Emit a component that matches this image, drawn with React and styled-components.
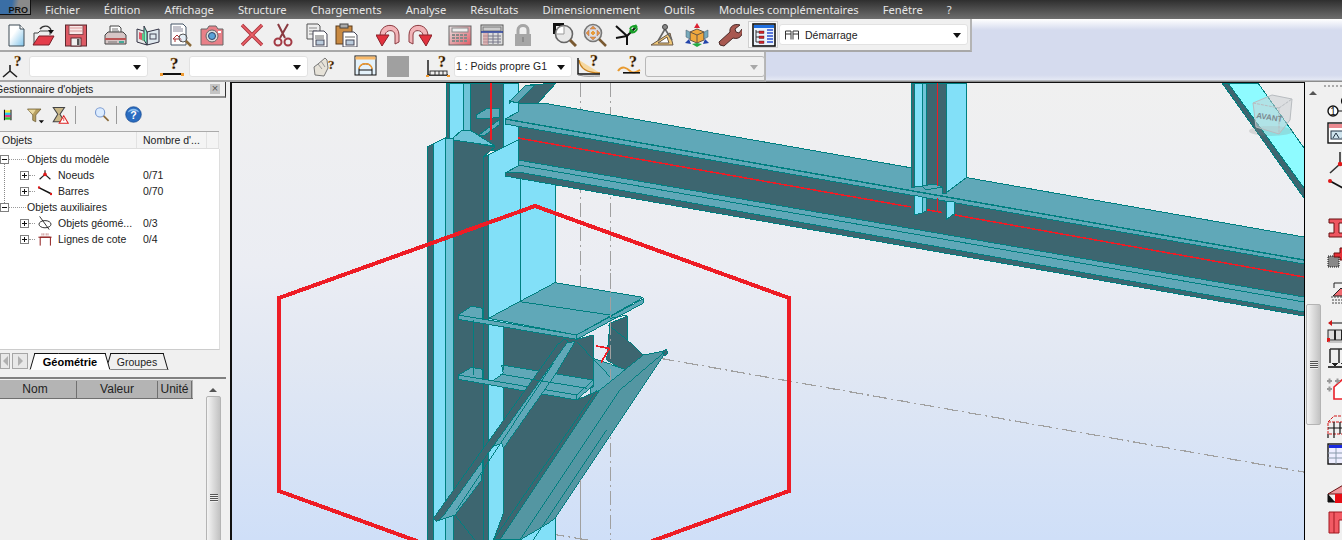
import styled, { createGlobalStyle } from "styled-components";

const GlobalStyle = createGlobalStyle`
  html, body {
    margin: 0;
    padding: 0;
    background: #f0f0f0;
    overflow: hidden;
  }
  * { box-sizing: border-box; }
`;

const UI_FONT = `"Liberation Sans", Arial, sans-serif`;

/* ---------- toolbar icons ---------- */
const Svg = ({ children, size = 24 }) => (
  <svg width={size} height={size} viewBox="0 0 24 24" style={{ display: "block" }}>{children}</svg>
);

const QMark = ({ x = 14, y = 11, size = 14 }) => (
  <text x={x} y={y} fontFamily="Liberation Serif, serif" fontWeight="bold" fontSize={size} fill="#111" stroke="#c8801c" strokeWidth=".3">?</text>
);

const NewIcon = () => (
  <Svg>
    <defs>
      <linearGradient id="pageFill" x1="0" y1="0" x2="1" y2="1">
        <stop offset="0.35" stopColor="#ffffff" />
        <stop offset="1" stopColor="#7fc3ea" />
      </linearGradient>
      <linearGradient id="pinkFill" x1="0" y1="0" x2="1" y2="1">
        <stop offset="0" stopColor="#e8e8e8" />
        <stop offset="1" stopColor="#e25c66" />
      </linearGradient>
    </defs>
    <path d="M5 2h11l4 4v17H5z" fill="url(#pageFill)" stroke="#3c4a55" />
    <path d="M16 2v4h4" fill="#fff" stroke="#3c4a55" />
  </Svg>
);
const OpenIcon = () => (
  <Svg>
    <path d="M3 21V10h4l2-2h10v4" fill="#eee" stroke="#444" />
    <path d="M2 22l6-9h15l-5 9z" fill="#e43c4a" stroke="#7a1f28" />
    <path d="M9 6c3-4 9-4 11 1" fill="none" stroke="#333" strokeWidth="1.400" />
    <path d="M17 7h6l-3 4z" fill="#111" />
  </Svg>
);
const SaveIcon = () => (
  <Svg>
    <rect x="1.500" y="2" width="21" height="21" fill="#dd5a64" stroke="#5a2a30" />
    <rect x="5" y="2.500" width="14" height="9" fill="#f8e8e8" stroke="#8a4a50" />
    <path d="M6 5h12M6 8h12" stroke="#d99" />
    <rect x="7" y="15" width="10" height="8" fill="#f0f0f0" stroke="#5a2a30" />
    <rect x="13" y="16" width="2.500" height="6" fill="#555" />
  </Svg>
);
const PrintIcon = () => (
  <Svg>
    <path d="M7 3h9l2 2v7H7z" fill="#fff" stroke="#444" />
    <path d="M9 6h6M9 8h7" stroke="#777" />
    <path d="M2 12l3-3h15l3 3v9H2z" fill="#d6c6c6" stroke="#444" />
    <path d="M2 16h21" stroke="#b55" strokeWidth="2" />
    <rect x="16" y="18" width="5" height="2" fill="#4a9" />
    <path d="M5 19h9" stroke="#777" />
  </Svg>
);
const BookIcon = () => (
  <Svg>
    <path d="M1 6l10 3v13L1 19z" fill="#e8e8e8" stroke="#334" />
    <path d="M11 9l12-3v13l-12 3z" fill="#dfe8ee" stroke="#334" />
    <path d="M8 3l3 6v13l-3-5z" fill="#8fc" stroke="#334" />
    <path d="M3 9l5 2v7l-5-2z" fill="#e05a6a" />
    <path d="M6 10l2 1v7l-2-1z" fill="#5c8" />
    <rect x="14" y="11" width="6" height="5" fill="none" stroke="#445" />
  </Svg>
);
const PreviewIcon = () => (
  <Svg>
    <path d="M3 1h12l3 3v18H3z" fill="#fff" stroke="#456" />
    <path d="M5 4h8M5 6h10M5 8h10" stroke="#889" />
    <path d="M5 16l4-4 4 4M5 16h8v3M7 16v3" fill="none" stroke="#a33" />
    <circle cx="15" cy="15" r="4" fill="#cde" fillOpacity=".5" stroke="#555" />
    <path d="M18 18l5 5" stroke="#8a6a3a" strokeWidth="2.500" />
  </Svg>
);
const CameraIcon = () => (
  <Svg>
    <path d="M1 6h6l2-3h7l2 3h5v16H1z" fill="#e98088" stroke="#666" />
    <circle cx="12" cy="13" r="6" fill="#ddd" stroke="#666" />
    <circle cx="12" cy="13" r="3.500" fill="#5ba3d8" stroke="#346" />
    <rect x="18" y="8" width="3" height="2" fill="#fff" />
  </Svg>
);
const DeleteIcon = () => (
  <Svg>
    <path d="M2 2l20 20M22 2L2 22" stroke="#a8343c" strokeWidth="3.400" />
    <path d="M2 2l20 20M22 2L2 22" stroke="#ec6068" strokeWidth="1.600" />
  </Svg>
);
const CutIcon = () => (
  <Svg>
    <path d="M7 1l7 14M17 1L9 15" stroke="#8a3a40" strokeWidth="2" />
    <circle cx="7" cy="19" r="3.500" fill="none" stroke="#a33a44" strokeWidth="2" />
    <circle cx="17" cy="19" r="3.500" fill="none" stroke="#a33a44" strokeWidth="2" />
  </Svg>
);
const CopyIcon = () => (
  <Svg>
    <path d="M2 1h11l2 2v13H2z" fill="#eee" stroke="#555" />
    <path d="M4 5h8M4 8h8M4 11h8" stroke="#888" />
    <path d="M8 8h11l3 3v13H8z" fill="#fff" stroke="#445" />
    <path d="M10 13h9M10 15h9" stroke="#666" />
    <rect x="11" y="17" width="8" height="5" fill="#bcd" stroke="#445" />
  </Svg>
);
const PasteIcon = () => (
  <Svg>
    <rect x="1" y="3" width="16" height="18" fill="#c98a42" stroke="#5a3a1a" />
    <rect x="5" y="1" width="8" height="4" fill="#aaa" stroke="#444" />
    <path d="M8 9h11l3 3v12H8z" fill="#fff" stroke="#445" />
    <path d="M10 14h10" stroke="#666" />
    <rect x="11" y="17" width="8" height="5" fill="#bcd" stroke="#445" />
  </Svg>
);
const UndoIcon = ({ flip }) => (
  <Svg>
    <g transform={flip ? "translate(24,0) scale(-1,1)" : undefined}>
      <path d="M4 13C4 -1 23 -1 23 12v7l-4 2v-9C19 6 9 6 9 13z" fill="#f2b4b8" stroke="#8a3a40" />
      <path d="M0 12h13l-7 11z" fill="#e2323e" stroke="#8a2028" />
    </g>
  </Svg>
);
const CalcIcon = () => (
  <Svg>
    <rect x="1" y="3" width="22" height="19" fill="url(#pinkFill)" stroke="#666" />
    <rect x="4" y="5" width="16" height="4" fill="#eee" stroke="#888" />
    {[11, 14, 17].map((y) => [4, 8, 12, 16].map((x) => <rect key={`${x}-${y}`} x={x} y={y} width="3" height="2" fill="#888" />))}
  </Svg>
);
const TableCalcIcon = () => (
  <Svg>
    <rect x="1" y="2" width="22" height="20" fill="#ddd" stroke="#555" />
    <rect x="3" y="4" width="18" height="4" fill="#ccc" stroke="#777" />
    <path d="M1 9h22" stroke="#223a9a" strokeWidth="1.500" />
    <path d="M3 13h18M3 16h18M3 19h18M8 10v11M13 10v11M18 10v11" stroke="#778" />
    <rect x="3" y="10" width="5" height="12" fill="#d99" fillOpacity=".6" />
  </Svg>
);
const LockIcon = () => (
  <Svg>
    <path d="M7 11V7c0-6 10-6 10 0v4" fill="none" stroke="#a6a6a6" strokeWidth="3" />
    <rect x="4" y="11" width="16" height="12" fill="#a6a6a6" />
    <rect x="11" y="14" width="2" height="5" fill="#8c8c8c" />
  </Svg>
);
const ZoomIcon = () => (
  <Svg>
    <path d="M0 0h11v3H3v8H0z" fill="#111" />
    <circle cx="11" cy="11" r="8.500" fill="#e8e8e8" stroke="#666" strokeWidth="1.600" />
    <path d="M3 11a8 8 0 0 1 8-8v8z" fill="#fff" stroke="#999" />
    <path d="M17 17l6 6" stroke="#7a5a32" strokeWidth="3" />
  </Svg>
);
const ZoomPanIcon = () => (
  <Svg>
    <circle cx="10" cy="10" r="8.500" fill="#ddd" stroke="#777" strokeWidth="1.600" />
    <path d="M10 3l3 3H7zM10 17l3-3H7zM3 10l3-3v6zM17 10l-3-3v6z" fill="#e89a3a" stroke="#a66" strokeWidth=".5" />
    <path d="M8 10h4M10 8v4" stroke="#e89a3a" strokeWidth="2" />
    <path d="M16 16l7 7" stroke="#7a5a32" strokeWidth="2.500" />
  </Svg>
);
const AxesIcon = () => (
  <Svg>
    <path d="M1 3l11 10v9M12 13l-11 2M12 13L21 4" fill="none" stroke="#111" strokeWidth="2" />
    <path d="M15 6c1-3 5-4 7-2M22 6c-1 3-4 4-6 3" fill="none" stroke="#18a028" strokeWidth="2" />
    <path d="M21 1l2 5-5-1zM14 10l1-5 4 3z" fill="#18a028" />
  </Svg>
);
const SquareIcon = () => (
  <Svg>
    <path d="M1 22L20 10l3 12z" fill="#f0c878" stroke="#654" />
    <path d="M8 20l9-6 2 6z" fill="#fff" stroke="#654" />
    <path d="M15 6l-7 12M15 6l7 11" stroke="#666" strokeWidth="1.600" />
    <circle cx="15" cy="4" r="2.500" fill="#888" stroke="#444" />
  </Svg>
);
const CubeIcon = () => (
  <Svg>
    <path d="M12 6l7 3v8l-7 3-7-3V9z" fill="#f0a83c" stroke="#654" />
    <path d="M5 9l7 3 7-3M12 12v8" fill="none" stroke="#654" />
    <path d="M12 0l3 5H9z" fill="#d23" />
    <path d="M0 20l4-4 2 5zM24 20l-4-4-2 5z" fill="#24a" />
    <path d="M1 7l4 2v7l-4-2zM23 7l-4 2v7l4-2z" fill="#7ab" stroke="#456" strokeWidth=".5" />
    <path d="M7 21l5 3 5-3-5-1z" fill="#2a4" />
  </Svg>
);
const WrenchIcon = () => (
  <Svg>
    <path d="M2 22l-1-3L12 9c-1-5 4-9 10-7l-5 4 1 3 3 1 3-4c2 6-3 11-9 9L6 23z" fill="#a85850" stroke="#4a2a28" />
  </Svg>
);
const TreeIcon = () => (
  <Svg>
    <rect x="1" y="1" width="22" height="22" fill="#eaf2fb" stroke="#111" strokeWidth="1.600" />
    <rect x="2" y="2" width="20" height="3" fill="#1f6fe0" />
    <path d="M4 7v12M4 9h3M4 14h3M4 19h3" stroke="#333" />
    <rect x="7" y="8" width="5" height="2.500" fill="#d2232a" stroke="#411" strokeWidth=".4" />
    <rect x="7" y="13" width="5" height="2.500" fill="#d2232a" stroke="#411" strokeWidth=".4" />
    <rect x="7" y="18" width="5" height="2.500" fill="#d2232a" stroke="#411" strokeWidth=".4" />
    <path d="M15 7h6M15 10h6M15 13h6M15 16h6M15 19h6" stroke="#2b50d0" strokeWidth="1.300" />
  </Svg>
);
const NodeQIcon = () => (
  <Svg>
    <path d="M8 11v6M8 17l-7 6M8 17l7 6" fill="none" stroke="#222" strokeWidth="1.600" />
    <QMark x={12} y={12} size={15} />
  </Svg>
);
const BarQIcon = () => (
  <Svg>
    <rect x="1" y="19" width="22" height="2" fill="#111" />
    <rect x="0" y="19" width="3" height="3" fill="#f09a30" />
    <rect x="21" y="19" width="3" height="3" fill="#f09a30" />
    <QMark x={10} y={15} size={17} />
  </Svg>
);
const HandQIcon = () => (
  <Svg>
    <path d="M2 21l-1-8 4-3 7-6 2 2 1 8-4 8z" fill="#e6e2d8" stroke="#777" />
    <path d="M5 10l4 5M8 7l4 6" stroke="#999" />
    <QMark x={15} y={15} size={13} />
  </Svg>
);
const FrameIcon = () => (
  <Svg>
    <rect x="1" y="2" width="21" height="19" fill="#e4f2fb" stroke="#111" />
    <rect x="1.500" y="2.500" width="20" height="3" fill="#f8b868" />
    <path d="M5 21v-6c0-7 13-7 13 0v6M5 16h13" fill="none" stroke="#111" />
    <path d="M5 15c1-7 12-7 13 0" fill="none" stroke="#f09a30" strokeWidth="1.400" />
  </Svg>
);
const LoadQIcon = () => (
  <Svg>
    <path d="M2 6v15h20" fill="none" stroke="#111" strokeWidth="1.400" />
    <rect x="4" y="17" width="17" height="4" fill="#eee" stroke="#333" />
    <path d="M9 17v4M13 17v4M17 17v4" stroke="#333" />
    <rect x="0" y="21" width="3" height="2" fill="#f09a30" />
    <rect x="21" y="21" width="3" height="2" fill="#f09a30" />
    <QMark x={12} y={13} size={16} />
  </Svg>
);
const SlopeQIcon = () => (
  <Svg>
    <path d="M2 6c1 8 8 13 21 13" fill="#f6d8a0" stroke="#c8801c" strokeWidth="1.400" />
    <path d="M1 4v16h22" fill="none" stroke="#111" strokeWidth="1.400" />
    <path d="M1 21c8 2 14 1 22 1" fill="none" stroke="#888" />
    <QMark x={13} y={12} size={16} />
  </Svg>
);
const CurveQIcon = () => (
  <Svg>
    <path d="M1 17c4-6 9-3 12 0s6 1 10-1" fill="none" stroke="#e89a30" strokeWidth="2" />
    <rect x="6" y="18" width="17" height="1.600" fill="#111" />
    <QMark x={12} y={13} size={16} />
  </Svg>
);

/* ---------- side bar icons ---------- */
const BindIcon = () => (
  <Svg>
    <path d="M6 3v18M17 3v18" stroke="#111" strokeWidth="2" />
    <rect x="7" y="4" width="9" height="4" fill="#f4e830" />
    <rect x="7" y="8" width="9" height="4" fill="#28c8f0" />
    <rect x="7" y="12" width="9" height="4" fill="#e83a8a" />
    <rect x="7" y="16" width="9" height="4" fill="#30c030" />
  </Svg>
);
const FunnelIcon = () => (
  <Svg>
    <path d="M2 4h18l-7 8v9l-4-2v-7z" fill="#b8a060" stroke="#6a5a30" />
    <path d="M3 5h10l-4 6z" fill="#e8d8a0" />
    <path d="M17 19h7l-3.500 4z" fill="#111" />
  </Svg>
);
const HourFilterIcon = () => (
  <Svg>
    <path d="M3 2h15l-6 9 6 10H3l6-10z" fill="#cab888" stroke="#444" strokeWidth="1.400" />
    <path d="M17 13l6 10H11z" fill="#fff" stroke="#d22" strokeWidth="1.400" />
    <path d="M17 16v4" stroke="#d22" />
  </Svg>
);
const SearchIcon = () => (
  <Svg>
    <circle cx="10" cy="9" r="6.500" fill="#dcecff" stroke="#7a9ad0" strokeWidth="1.600" />
    <path d="M15 14l7 7" stroke="#8a6a3a" strokeWidth="2.400" />
  </Svg>
);
const HelpIcon = () => (
  <Svg>
    <circle cx="12" cy="12" r="11" fill="#2a6cc0" stroke="#164a90" />
    <path d="M4 9c2-7 14-7 16 0-5-3-11-3-16 0z" fill="#8cc0f0" />
    <text x="12" y="18" textAnchor="middle" fontFamily="Liberation Sans, sans-serif" fontWeight="bold" fontSize="15" fill="#fff">?</text>
  </Svg>
);
const NodeTreeIcon = () => (
  <Svg size={16}>
    <path d="M12 11v-7M12 11l-9 8M12 11l9 8" stroke="#222" strokeWidth="2" />
    <circle cx="12" cy="11" r="3" fill="#e01818" />
  </Svg>
);
const BarTreeIcon = () => (
  <Svg size={16}>
    <path d="M1 6l22 11" stroke="#111" strokeWidth="2.400" />
    <circle cx="2" cy="6" r="2" fill="#e01818" />
    <circle cx="22" cy="17" r="2" fill="#e01818" />
  </Svg>
);
const GeomTreeIcon = () => (
  <Svg size={16}>
    <path d="M3 1l16 22" stroke="#111" strokeWidth="1.400" />
    <ellipse cx="12" cy="14" rx="10" ry="6" fill="none" stroke="#111" strokeWidth="1.400" />
  </Svg>
);
const DimTreeIcon = () => (
  <Svg size={16}>
    <path d="M4 23V9h17v14" fill="none" stroke="#8a1414" strokeWidth="1.600" />
    <path d="M1 9h22" stroke="#8a1414" strokeWidth="1.600" />
    <path d="M7 6V2M10 6V2M14 6V2M17 6V2" stroke="#8a1414" strokeDasharray="2 1" />
  </Svg>
);

/* ---------- right bar icons ---------- */
const SnapIcon = () => (
  <Svg>
    <circle cx="6" cy="15" r="5" fill="#fff" stroke="#111" strokeWidth="1.400" />
    <text x="6" y="19" textAnchor="middle" fontFamily="Liberation Sans, sans-serif" fontSize="10" fill="#111">1</text>
    <path d="M11 15h13" stroke="#111" />
    <circle cx="19" cy="5" r="4.500" fill="#fff" stroke="#111" strokeWidth="1.200" />
  </Svg>
);
const ViewIcon = () => (
  <Svg>
    <rect x="1" y="2" width="23" height="20" fill="#fff" stroke="#111" strokeWidth="1.400" />
    <rect x="2" y="3" width="22" height="4" fill="#ea8a90" />
    <rect x="4" y="10" width="20" height="8" fill="#cfe4ee" stroke="#234" />
    <path d="M6 17l3-5 3 5M15 17l3-5 3 5" fill="none" stroke="#234" />
  </Svg>
);
const NodeBarIcon = () => (
  <Svg>
    <path d="M13 2v12M13 14L3 23M13 14l11 5" stroke="#333" strokeWidth="1.600" />
    <circle cx="13" cy="14" r="2.200" fill="#e01818" />
  </Svg>
);
const LineBarIcon = () => (
  <Svg>
    <path d="M3 5l22 12" stroke="#111" strokeWidth="1.800" />
    <circle cx="3" cy="5" r="2" fill="#e01818" />
  </Svg>
);
const BeamIcon = () => (
  <Svg>
    <path d="M2 3h22v4H12v10h12v4H2v-4h5V7H2z" fill="#ee5560" stroke="#611" />
  </Svg>
);
const SectionIcon = () => (
  <Svg>
    <rect x="1" y="11" width="11" height="11" fill="#888" stroke="#111" strokeDasharray="1 1" />
    <path d="M7 8h6V3h12v12H13v-3H7z" fill="#e83038" stroke="#611" />
  </Svg>
);
const SupportIcon = () => (
  <Svg>
    <path d="M7 2v5M24 2H7M14 7l-8 8h16z" fill="#f06a70" stroke="#222" />
    <path d="M4 16h24M5 19h24M5 22h24" stroke="#444" strokeDasharray="2 1" />
  </Svg>
);
const SpanIcon = () => (
  <Svg>
    <path d="M2 3h22" stroke="#111" />
    <path d="M1 3l4-3v6zM24 0v6" fill="#d01818" />
    <rect x="1" y="10" width="24" height="10" fill="#ddd" stroke="#222" />
    <path d="M8 10v10M15 10v10M22 10v10" stroke="#222" strokeWidth="2" />
    <rect x="0" y="18" width="3" height="4" fill="#e01818" />
    <path d="M1 22h24" stroke="#999" />
  </Svg>
);
const LoadsIcon = () => (
  <Svg>
    <path d="M3 2h20v14M3 2v14M12 2v14" fill="none" stroke="#333" strokeWidth="1.600" />
    <path d="M1 20h24" stroke="#111" strokeWidth="1.600" />
    <path d="M5 16l3 3 3-3M14 16l3 3 3-3" fill="#222" stroke="#222" />
  </Svg>
);
const HouseIcon = () => (
  <Svg>
    <path d="M7 23V11l10-9 8 7v14z" fill="#fff" stroke="#ea2028" strokeWidth="1.600" />
    <path d="M0 5h5M2.500 2.500v5M8 5h5M10.500 2.500v5M0 13h5M2.500 10.500v5" stroke="#999" strokeWidth="2" />
  </Svg>
);
const GridCubeIcon = () => (
  <Svg>
    <path d="M1 8h18v12H1zM7 2h18M1 8l6-6M19 8l6-6" fill="none" stroke="#d01818" strokeDasharray="3 1" />
    <path d="M7 8v16M13 8v12M1 14h18M1 20v4M19 20v4" stroke="#111" strokeWidth="1.200" />
  </Svg>
);
const GridTableIcon = () => (
  <Svg>
    <rect x="1" y="2" width="24" height="20" fill="#eef" stroke="#111" strokeWidth="1.400" />
    <rect x="2" y="3" width="23" height="3" fill="#1a2ae0" />
    <path d="M9 6v16M17 6v16M1 11h24M1 16h24" stroke="#89a" />
  </Svg>
);
const FootingIcon = () => (
  <Svg>
    <path d="M1 13L18 3h7v10z" fill="#ee9aa0" stroke="#611" />
    <rect x="8" y="13" width="17" height="9" fill="#e80c14" />
    <path d="M1 13v8h7" fill="#111" stroke="#111" />
    <path d="M16 13v9" stroke="#111" strokeWidth="1.600" />
  </Svg>
);
const PortalIcon = () => (
  <Svg>
    <path d="M2 2h24v8H12v13H2z" fill="#f25a64" stroke="#a01820" />
    <path d="M7 2v21" stroke="#a01820" />
  </Svg>
);

const MAIN_TOOLS = [
  [NewIcon, 4], [OpenIcon, 3], [SaveIcon, 9], [PrintIcon, 15], [BookIcon, 9], [PreviewIcon, 8], [CameraIcon, 8],
  [DeleteIcon, 16], [CutIcon, 7], [CopyIcon, 10], [PasteIcon, 6], [UndoIcon, 17], [() => <UndoIcon flip />, 8],
  [CalcIcon, 16], [TableCalcIcon, 8], [LockIcon, 7], [ZoomIcon, 18], [ZoomPanIcon, 6], [AxesIcon, 8],
  [SquareIcon, 11], [CubeIcon, 11], [WrenchIcon, 9],
];

const SIDE_TOOLS = [
  [BindIcon, 0, 14], [FunnelIcon, 11, 18], [HourFilterIcon, 7, 18],
  "sep", [SearchIcon, 17, 17], "sep", [HelpIcon, 8, 17],
];

const RIGHT_TOOLS = [
  [SnapIcon, 14], [ViewIcon, 1], [NodeBarIcon, 5], [LineBarIcon, 2], [BeamIcon, 16], [SectionIcon, 5], [SupportIcon, 12],
  [SpanIcon, 15], [LoadsIcon, 3], [HouseIcon, 5], [GridCubeIcon, 14], [GridTableIcon, 4], [FootingIcon, 15], [PortalIcon, 5],
];

const MENU = ["Fichier", "Édition", "Affichage", "Structure", "Chargements", "Analyse", "Résultats", "Dimensionnement", "Outils", "Modules complémentaires", "Fenêtre", "?"];

/* ---------- 3D scene ---------- */
const CYAN = "#82e0f8";
const PALE = "#6fc4d8";
const DARK = "#3d6670";
const MID = "#60a8b8";
const BRACE = "#5496a2";
const AQUA = "#8efbff";
const TEAL = "#007f80";
const RED = "#ee1c25";

// page coordinates
const backFaces = [
  // diagonal top right
  [DARK, "1222,83 1230,83 1304,186 1304,198"],
  [AQUA, "1228,83 1258,83 1304,148 1304,188"],
  // upper stub of the main column
  [DARK, "446,83 449,83 449,140 446,140"],
  [CYAN, "449,83 463,83 463,135 449,140"],
  [PALE, "463,83 470,83 470,132 463,135"],
  [DARK, "470,83 503,83 503,150 470,150"],
  [CYAN, "503,83 518,83 518,160 503,160"],
  [MID, "476,115 488,108 499,108 499,117 488,119 476,118"],
  [MID, "479,135 499,120 499,125 485,135"],
  // upper brace
  [DARK, "509,100 509,104 530,85 556,83 530,112 518,112 518,100"],
  [MID, "510,101 526,85 535,85 517,103"],
  [CYAN, "488,155 520,139 520,540 488,540"],
  [CYAN, "520,150 555,150 555,540 520,540"],
];

const beamFaces = [
  // web
  [DARK, "518,110 1304,247 1304,300 518,162"],
  // top flange
  [MID, "505,119 518,112 518,103 543,103 1304,237 1304,260"],
  [MID, "505,119 1304,260 1304,264 505,124"],
  // bottom flange
  [MID, "518,160 1304,297 1304,312 505,173 518,166"],
];

// left part of the main column, front of the stub
const columnFaces = [
  [DARK, "453,139 495,147 483,157 483,540 453,540"],
  [DARK, "483,157 488,155 488,540 483,540"],
  [DARK, "427,147 433,144 433,540 427,540"],
  [CYAN, "433,144 445,138 445,540 433,540"],
  [PALE, "445,138 453,139 453,540 445,540"],
  [PALE, "453,138 462,130 470,130 478,135 495,146 453,140"],
];

const uprightFaces = [
  [CYAN, "914,195 922,197 922,213 914,215"],
  [PALE, "922,197 926,198 926,211 922,213"],
  [CYAN, "946,201 954,202 954,214 946,220"],
  [DARK, "911,83 914,83 914,187 911,187"],
  [CYAN, "914,83 922,83 922,186 914,187"],
  [PALE, "922,83 926,83 926,185 922,186"],
  [DARK, "926,83 946,83 946,193 942,193 942,187 926,185"],
  [CYAN, "946,83 966,83 966,178 946,193"],
  [MID, "922,186 935,184 942,187 926,190"],
];

// coordinates read from the 3x crop at (420,280)
const lowerFaces = [
  [MID, "115,105 155,78 187,85 187,118 115,118"],
  [MID, "115,285 155,262 187,268 187,298 115,298"],
  [DARK, "570,130 622,108 622,180 670,225 660,250 610,270 560,240"],
  [MID, "520,235 620,270 640,265 670,225 540,340 510,345"],
  [DARK, "250,140 470,178 520,165 520,320 470,345 250,300"],
  [DARK, "250,295 470,360 540,330 240,780 220,780 250,700"],
  [MID, "205,115 405,8 670,52 470,165"],
  [MID, "115,105 470,165 470,178 115,118"],
  [MID, "470,165 672,55 672,68 470,178"],
  [MID, "215,305 250,280 245,255 520,300 470,345"],
  [MID, "115,285 470,345 470,360 115,298"],
  [MID, "470,345 520,300 520,315 470,360"],
  [BRACE, "240,780 540,330 670,225 740,212 405,715 385,730 300,780"],
  [MID, "55,722 105,705 185,600 190,510 245,490 250,505 405,285 465,185 415,190"],
  [DARK, "40,715 412,195 432,178 445,183 70,708 50,725"],
  [DARK, "725,215 738,208 745,220 735,228"],
];

const lowerLines = [
  "160,120 160,285",
  "300,65 570,105",
  "240,282 500,325",
  "250,140 250,270",
  "520,165 520,320",
  "470,185 570,290",
  "300,780 600,330 735,215",
  "220,780 530,330",
  "105,705 165,780",
  "110,690 400,250",
  "340,780 560,450",
  "565,135 622,180",
  "570,115 622,105",
];

const Face = ({ fill, points, width = 1 }) => (
  <polygon points={points} fill={fill} stroke={TEAL} strokeWidth={width} strokeLinejoin="miter" />
);

const Scene = () => (
  <SceneSvg viewBox="232 83 1072 457" shapeRendering="crispEdges">
    <g stroke="#a0a0a0" strokeWidth="1.200" fill="none" strokeDasharray="14 4 2 4">
      <path d="M580.500 83V540M610.500 83V540" />
      <path d="M613 350L1304 472M527 530L612 544" />
    </g>
    {backFaces.map(([fill, points]) => <Face key={points} fill={fill} points={points} />)}
    <path d="M491 83V140" stroke={RED} strokeWidth="1.400" />
    <path d="M520 195V540" stroke={TEAL} />
    {beamFaces.map(([fill, points]) => <Face key={points} fill={fill} points={points} />)}
    <path d="M518 138L911 207M920 208.500L942 212.500M955 215L1304 277" stroke={RED} strokeWidth="1.500" fill="none" />
    <path d="M518 165L1304 302" stroke={TEAL} fill="none" />
    <path d="M518 172L505 173V176L1304 316V312Z" fill={DARK} stroke={TEAL} />
    {columnFaces.map(([fill, points]) => <Face key={points} fill={fill} points={points} />)}
    {uprightFaces.map(([fill, points]) => <Face key={points} fill={fill} points={points} />)}
    <path d="M937 83V186M937 198V212" stroke={RED} />
    <path d="M505 119L1304 260" stroke={TEAL} fill="none" strokeWidth="1.400" />
    <g transform="translate(420,280) scale(.33333)">
      {lowerFaces.map(([fill, points]) => <Face key={points} fill={fill} points={points} width={3} />)}
      {lowerLines.map((points) => <polyline key={points} points={points} fill="none" stroke={TEAL} strokeWidth="3" />)}
      <polyline points="527,198 568,205 543,248" fill="none" stroke={RED} strokeWidth="5" />
      <path d="M481 600V780" stroke="#a0a0a0" strokeWidth="3" strokeDasharray="42 12 6 12" />
      <path d="M571 -20V300" stroke="#a0a0a0" strokeWidth="3" strokeDasharray="42 12 6 12" />
    </g>
    {/* view cube */}
    <g shapeRendering="auto">
      <ellipse cx="1271" cy="131" rx="22" ry="5" fill="#888" fillOpacity=".25" />
      <path d="M1253 103L1272 95 1292 99 1290 120 1279 134 1256 127Z" fill="#ccd0d4" fillOpacity=".55" stroke="#b8bcc0" />
      <path d="M1253 103L1279 108 1279 134M1279 108L1292 99" fill="none" stroke="#b8bcc0" strokeDasharray="3 1" />
      <text x="1256" y="118" transform="rotate(9 1256 118)" fontFamily="Liberation Sans, sans-serif" fontWeight="bold" fontSize="8" fill="#7c8a90">AVANT</text>
    </g>
    <polygon points="535,206 789,298 789,491 535,584 279,491 279,298" fill="none" stroke={RED} strokeWidth="4" />
  </SceneSvg>
);

/* ---------- page ---------- */
export default function App() {
  return (
    <Page>
      <GlobalStyle />
      <MenuBar>
        <Logo>PRO</Logo>
        {MENU.map((item) => <MenuItem key={item}>{item}</MenuItem>)}
      </MenuBar>

      <ToolArea>
        <Toolbar $width={972} $height={33}>
          {MAIN_TOOLS.map(([Icon, gap], i) => <ToolSlot key={i} $gap={gap}><Icon /></ToolSlot>)}
          <ActiveTool><TreeIcon /></ActiveTool>
          <Combo $width={189} $gap={1} $height={21}>
            <FrameGlyph>
              <svg width="14" height="10" viewBox="0 0 14 10"><path d="M.5 9.500V1h5.500v8.500M8 9.500V1h5.500v8.500M.5 4h5.500M8 4h5.500" fill="none" stroke="#333" /></svg>
            </FrameGlyph>
            Démarrage
            <Arrow />
          </Combo>
        </Toolbar>
        <Toolbar $width={766} $height={30}>
          <ToolSlot $gap={2}><NodeQIcon /></ToolSlot>
          <Combo $width={119} $gap={3}><Arrow /></Combo>
          <ToolSlot $gap={12}><BarQIcon /></ToolSlot>
          <Combo $width={119} $gap={5}><Arrow /></Combo>
          <ToolSlot $gap={5}><HandQIcon /></ToolSlot>
          <ToolSlot $gap={17}><FrameIcon /></ToolSlot>
          <GraySquare />
          <ToolSlot $gap={17}><LoadQIcon /></ToolSlot>
          <Combo $width={118} $gap={4}>1 : Poids propre G1<Arrow /></Combo>
          <ToolSlot $gap={5}><SlopeQIcon /></ToolSlot>
          <ToolSlot $gap={16}><CurveQIcon /></ToolSlot>
          <Combo $width={120} $gap={4} $disabled><Arrow $disabled /></Combo>
        </Toolbar>
      </ToolArea>

      <Main>
        <Sidebar>
          <PanelTitle>
            <TitleText>Gestionnaire d'objets</TitleText>
            <CloseBox>×</CloseBox>
          </PanelTitle>
          <PanelTools>
            {SIDE_TOOLS.map((tool, i) => {
              if (tool === "sep") return <ToolSep key={i} />;
              const [Icon, gap, size] = tool;
              return <SideTool key={i} $gap={gap} $size={size}><Icon /></SideTool>;
            })}
          </PanelTools>
          <TreeHead>
            <HeadCell $width={137}>Objets</HeadCell>
            <HeadCell $width={70}>Nombre d'...</HeadCell>
            <HeadCell $width={12} />
          </TreeHead>
          <Tree>
            <TreeGuide />
            <RootRow>
              <Expander $open /><Dots $width={17} /><RowLabel>Objets du modèle</RowLabel>
            </RootRow>
            <ChildRow><Expander /><Dots $width={6} /><RowIcon><NodeTreeIcon /></RowIcon><RowLabel $width={85}>Noeuds</RowLabel><span>0/71</span></ChildRow>
            <ChildRow><Expander /><Dots $width={6} /><RowIcon><BarTreeIcon /></RowIcon><RowLabel $width={85}>Barres</RowLabel><span>0/70</span></ChildRow>
            <RootRow>
              <Expander $open /><Dots $width={17} /><RowLabel>Objets auxiliaires</RowLabel>
            </RootRow>
            <ChildRow><Expander /><Dots $width={6} /><RowIcon><GeomTreeIcon /></RowIcon><RowLabel $width={85}>Objets géomé...</RowLabel><span>0/3</span></ChildRow>
            <ChildRow><Expander /><Dots $width={6} /><RowIcon><DimTreeIcon /></RowIcon><RowLabel $width={85}>Lignes de cote</RowLabel><span>0/4</span></ChildRow>
          </Tree>
          <TabStrip>
            <NavButton $width={10}><NavArrow $left /></NavButton>
            <NavButton $width={16}><NavArrow /></NavButton>
            <Tab $active $width={76}>Géométrie</Tab>
            <Tab $width={58}>Groupes</Tab>
          </TabStrip>
          <PropsPanel>
            <PropsHead>
              <PropsCell $width={77} $shift={6}>Nom</PropsCell>
              <PropsCell $width={81}>Valeur</PropsCell>
              <PropsCell $width={34}>Unité</PropsCell>
            </PropsHead>
            <PropsScroll>
              <ScrollUp />
              <ScrollThumb $top={17} $height={204}><Grip /></ScrollThumb>
            </PropsScroll>
          </PropsPanel>
        </Sidebar>

        <Viewport><Scene /></Viewport>

        <MainScroll>
          <ScrollUp />
          <ScrollThumb $top={222} $height={121}><Grip /></ScrollThumb>
        </MainScroll>

        <RightBar>
          <BarGrip />
          {RIGHT_TOOLS.map(([Icon, gap], i) => <RightSlot key={i} $gap={gap}><Icon /></RightSlot>)}
        </RightBar>
      </Main>
    </Page>
  );
}

const Page = styled.div`
  width: 1342px;
  height: 540px;
  overflow: hidden;
  display: flex;
  flex-direction: column;
  font-family: ${UI_FONT};
  font-size: 10.500px;
  color: #222;
  background: #f0f0f0;
`;

const MenuBar = styled.div`
  position: relative;
  flex: none;
  height: 19px;
  display: flex;
  align-items: center;
  gap: 24px;
  padding-left: 45px;
  background: linear-gradient(#2f2f2f, #6e6e6e);
  font-family: "Noto Sans", sans-serif;
  font-size: 11.200px;
  color: #e6e6e6;
`;

const Logo = styled.div`
  position: absolute;
  left: -1px;
  top: -6px;
  width: 32px;
  height: 21px;
  padding: 10px 2px 0 0;
  text-align: right;
  font-family: ${UI_FONT};
  font-size: 9px;
  font-weight: bold;
  line-height: 10px;
  color: #111;
  background: linear-gradient(100deg, #3a6ea5 0 40%, #8a8a8a 60%);
  border: 1px solid #111;
`;

const MenuItem = styled.span`
  white-space: nowrap;
`;

const ToolArea = styled.div`
  flex: none;
  height: 63px;
  background: linear-gradient(#ffffff 0, #d5dbee 11px, #d5dbee 56px, #e4e8f4 61px, #8c8c8c 62px);
`;

const Toolbar = styled.div`
  width: ${(p) => p.$width}px;
  height: ${(p) => p.$height}px;
  display: flex;
  align-items: center;
  background: #f0f0f0;
  border-bottom: 2px solid #a8a8a8;
  border-right: 2px solid #b4b4b4;
`;

const ToolSlot = styled.div`
  flex: none;
  width: 24px;
  height: 24px;
  margin-left: ${(p) => p.$gap}px;
`;

const ActiveTool = styled.div`
  flex: none;
  width: 30px;
  height: 27px;
  margin-left: 6px;
  padding: 1px 3px;
  background: #fafafa;
  border: 1px solid #d0d0d0;
`;

const Combo = styled.div`
  position: relative;
  flex: none;
  width: ${(p) => p.$width}px;
  height: ${(p) => p.$height || 21}px;
  margin-left: ${(p) => p.$gap}px;
  padding: 0 18px 0 1px;
  display: flex;
  align-items: center;
  white-space: nowrap;
  font-size: 10.500px;
  color: #222;
  background: ${(p) => (p.$disabled ? "#f0f0f0" : "#fff")};
  border: 1px solid ${(p) => (p.$disabled ? "#b8b8b8" : "#e2e2e2")};
  border-radius: 3px;
`;

const FrameGlyph = styled.span`
  display: flex;
  margin: 0 6px 0 4px;
`;

const Arrow = styled.span`
  position: absolute;
  right: 6px;
  top: 8px;
  border-left: 4px solid transparent;
  border-right: 4px solid transparent;
  border-top: 5px solid ${(p) => (p.$disabled ? "#a8a8a8" : "#111")};
`;

const GraySquare = styled.div`
  flex: none;
  width: 22px;
  height: 21px;
  margin-left: 9px;
  background: #a0a0a0;
`;

const Main = styled.div`
  flex: 1;
  min-height: 0;
  display: flex;
`;

const Sidebar = styled.div`
  flex: none;
  width: 230px;
  display: flex;
  flex-direction: column;
  background: #f0f0f0;
  overflow: hidden;
`;

const PanelTitle = styled.div`
  flex: none;
  width: 226px;
  height: 16px;
  display: flex;
  align-items: center;
  justify-content: space-between;
  padding-right: 5px;
  border-right: 1px solid #333;
  border-bottom: 2px solid #8f8f8f;
  background: #efefef;
`;

const TitleText = styled.span`
  margin-left: -5px;
`;

const CloseBox = styled.span`
  width: 10px;
  height: 10px;
  line-height: 9px;
  text-align: center;
  font-size: 11px;
  color: #555;
  background: #c4c4c4;
`;

const PanelTools = styled.div`
  flex: none;
  height: 33px;
  padding-left: 1px;
  display: flex;
  align-items: center;
`;

const SideTool = styled.div`
  flex: none;
  width: ${(p) => p.$size}px;
  height: ${(p) => p.$size}px;
  margin-left: ${(p) => p.$gap}px;
  & svg { width: 100%; height: 100%; }
`;

const ToolSep = styled.div`
  flex: none;
  width: 1px;
  height: 18px;
  margin-left: 6px;
  background: #9a9a9a;
`;

const TreeHead = styled.div`
  flex: none;
  width: 219px;
  height: 18px;
  display: flex;
  background: #f4f4f4;
  border-top: 1px solid #aaa;
  border-bottom: 1px solid #ddd;
`;

const HeadCell = styled.div`
  flex: none;
  width: ${(p) => p.$width}px;
  padding-left: ${(p) => (p.$width > 100 ? 2 : 6)}px;
  line-height: 17px;
  border-right: 1px solid #e2e2e2;
  white-space: nowrap;
`;

const Tree = styled.div`
  position: relative;
  flex: none;
  width: 220px;
  height: 201px;
  background: #fff;
  border-right: 1px solid #ddd;
  border-bottom: 1px solid #ccc;
  padding-top: 2px;
`;

const TreeGuide = styled.div`
  position: absolute;
  left: 4px;
  top: 14px;
  height: 46px;
  border-left: 1px dotted #888;
`;

const RootRow = styled.div`
  height: 16px;
  display: flex;
  align-items: center;
`;

const ChildRow = styled(RootRow)`
  padding-left: 20px;
`;

const Expander = styled.span`
  position: relative;
  flex: none;
  width: 9px;
  height: 9px;
  background: #fff;
  border: 1px solid #808080;
  &::before {
    content: "";
    position: absolute;
    left: 1px;
    right: 1px;
    top: 3px;
    height: 1px;
    background: #111;
  }
  &::after {
    content: "";
    display: ${(p) => (p.$open ? "none" : "block")};
    position: absolute;
    top: 1px;
    bottom: 1px;
    left: 3px;
    width: 1px;
    background: #111;
  }
`;

const Dots = styled.span`
  flex: none;
  width: ${(p) => p.$width}px;
  border-top: 1px dotted #999;
`;

const RowIcon = styled.span`
  flex: none;
  width: 16px;
  height: 16px;
  margin: 0 4px 0 2px;
  transform: scale(.9);
`;

const RowLabel = styled.span`
  flex: none;
  width: ${(p) => (p.$width ? `${p.$width}px` : "auto")};
  margin-left: 1px;
  white-space: nowrap;
`;

const TabStrip = styled.div`
  flex: none;
  height: 27px;
  padding-top: 3px;
  display: flex;
  align-items: flex-start;
  gap: 2px;
`;

const NavButton = styled.div`
  flex: none;
  width: ${(p) => p.$width}px;
  height: 16px;
  display: flex;
  align-items: center;
  justify-content: center;
  background: #e8e8e8;
  border: 1px solid #a6a6a6;
`;

const NavArrow = styled.span`
  border-top: 5px solid transparent;
  border-bottom: 5px solid transparent;
  ${(p) => (p.$left ? "border-right: 5px solid #b0b0b0;" : "border-left: 5px solid #b0b0b0;")}
`;

const Tab = styled.div`
  position: relative;
  flex: none;
  width: ${(p) => p.$width}px;
  height: 17px;
  margin-left: ${(p) => (p.$active ? 2 : -2)}px;
  line-height: 18px;
  text-align: center;
  font-size: ${(p) => (p.$active ? "11px" : "10.500px")};
  font-weight: ${(p) => (p.$active ? "bold" : "normal")};
  color: ${(p) => (p.$active ? "#000" : "#222")};
  z-index: ${(p) => (p.$active ? 1 : 0)};
  &::before, &::after {
    content: "";
    position: absolute;
    top: 0;
    bottom: 0;
    width: 60%;
    z-index: -1;
    background: ${(p) => (p.$active ? "#fff" : "#f0f0f0")};
    border-top: 1px solid #111;
    border-bottom: 1px solid ${(p) => (p.$active ? "#fff" : "#888")};
  }
  &::before {
    left: 0;
    border-left: 1px solid #111;
    transform: skewX(-16deg);
  }
  &::after {
    right: 0;
    border-right: 1px solid #111;
    transform: skewX(16deg);
  }
`;

const PropsPanel = styled.div`
  position: relative;
  flex: 1;
  width: 226px;
  border-top: 2px solid #808080;
  padding-top: 1px;
`;

const PropsHead = styled.div`
  display: flex;
  width: 193px;
  height: 19px;
  background: #b4b4b4;
  border-top: 1px solid #b4b4b4;
  border-bottom: 1px solid #707070;
`;

const PropsCell = styled.div`
  flex: none;
  width: ${(p) => p.$width}px;
  padding-right: ${(p) => p.$shift || 0}px;
  font-size: 12px;
  line-height: 17px;
  text-align: center;
  border-right: 1px solid #707070;
`;

const PropsScroll = styled.div`
  position: absolute;
  left: 205px;
  top: 0;
  bottom: 0;
  width: 18px;
`;

const Viewport = styled.div`
  flex: none;
  width: 1075px;
  height: 458px;
  border-left: 2px solid #111;
  border-right: 1px solid #000;
  border-top: 1px solid #111;
  background: linear-gradient(#f0f0f0, #ebedf3 40%, #e2e8f3 60%, #cfdff8);
`;

const SceneSvg = styled.svg`
  display: block;
  width: 1072px;
  height: 457px;
`;

const MainScroll = styled.div`
  position: relative;
  flex: none;
  width: 18px;
  background: #f0f0f0;
`;

const ScrollUp = styled.div`
  position: absolute;
  left: 4px;
  top: 9px;
  border-left: 4px solid transparent;
  border-right: 4px solid transparent;
  border-bottom: 4px solid #555;
`;

const ScrollThumb = styled.div`
  position: absolute;
  left: 1px;
  top: ${(p) => p.$top}px;
  width: 15px;
  height: ${(p) => p.$height}px;
  display: flex;
  align-items: center;
  justify-content: center;
  background: linear-gradient(90deg, #f4f4f4, #c2c2c2);
  border: 1px solid #b4b4b4;
  border-radius: 2px;
`;

const Grip = styled.div`
  width: 8px;
  height: 8px;
  background: repeating-linear-gradient(#555 0 1px, #eee 1px 2px);
`;

const RightBar = styled.div`
  position: relative;
  flex: none;
  width: 19px;
  overflow: hidden;
  padding-left: 4px;
  background: #f0f0f0;
`;

const BarGrip = styled.div`
  position: absolute;
  left: 1px;
  right: 0;
  top: 3px;
  height: 2px;
  background: repeating-linear-gradient(90deg, #aaa 0 2px, transparent 2px 4px);
`;

const RightSlot = styled.div`
  width: 26px;
  height: 24px;
  margin-top: ${(p) => p.$gap}px;
`;
